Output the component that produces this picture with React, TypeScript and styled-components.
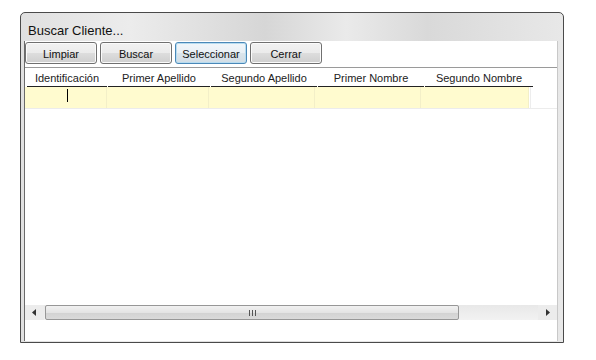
import styled, { createGlobalStyle } from 'styled-components';

const GlobalStyle = createGlobalStyle`
  html, body { margin: 0; padding: 0; background: #ffffff; }
  body { font-family: "Liberation Sans", Arial, sans-serif; }
`;

const columns = [
  { title: 'Identificación', width: 82 },
  { title: 'Primer Apellido', width: 102 },
  { title: 'Segundo Apellido', width: 106 },
  { title: 'Primer Nombre', width: 106 },
  { title: 'Segundo Nombre', width: 108 },
];

export default function App() {
  return (
    <>
      <GlobalStyle />
      <Page>
        <Window>
          <TitleBar>
            <Title>Buscar Cliente...</Title>
          </TitleBar>
          <Client>
            <Toolbar>
              <Button>Limpiar</Button>
              <Button>Buscar</Button>
              <Button $focused>Seleccionar</Button>
              <Button>Cerrar</Button>
            </Toolbar>
            <Grid>
              <HeaderRow>
                {columns.map((c) => (
                  <HeaderCell key={c.title} $w={c.width}>
                    {c.title}
                  </HeaderCell>
                ))}
                <Filler />
              </HeaderRow>
              <DataRow>
                {columns.map((c, i) => (
                  <DataCell key={c.title} $w={c.width}>
                    {i === 0 && <Caret />}
                  </DataCell>
                ))}
                <EmptyCell />
              </DataRow>
              <GridBody />
              <ScrollBar>
                <ArrowButton>
                  <svg width="5" height="7" viewBox="0 0 5 7">
                    <path d="M4 0 L0 3.5 L4 7 Z" fill="#333" />
                  </svg>
                </ArrowButton>
                <Thumb>
                  <Grip>
                    <i />
                    <i />
                    <i />
                  </Grip>
                </Thumb>
                <Track />
                <ArrowButton>
                  <svg width="5" height="7" viewBox="0 0 5 7">
                    <path d="M1 0 L5 3.5 L1 7 Z" fill="#333" />
                  </svg>
                </ArrowButton>
              </ScrollBar>
            </Grid>
            <Footer />
          </Client>
        </Window>
      </Page>
    </>
  );
}

const Page = styled.div`
  padding: 12px 0 0 20px;
`;

const Window = styled.div`
  width: 544px;
  height: 331px;
  box-sizing: border-box;
  border: 1px solid #4a4a4a;
  border-radius: 5px 5px 0 0;
  background: linear-gradient(90deg, #e0e0e0 0%, #ececec 20%, #d6d6d6 45%, #eaeaea 60%, #d9d9d9 75%, #e8e8e8 100%);
  padding: 0 5px 1px 3px;
  display: flex;
  flex-direction: column;
`;

const TitleBar = styled.div`
  height: 28px;
  display: flex;
  align-items: center;
  padding-left: 4px;
  padding-top: 6px;
  box-sizing: border-box;
`;

const Title = styled.span`
  font-size: 13px;
  color: #111;
`;

const Client = styled.div`
  flex: 1;
  background: #ffffff;
  border-left: 1px solid #6a6a6a;
  border-right: 1px solid #c8c8c8;
  display: flex;
  flex-direction: column;
  min-height: 0;
`;

const Toolbar = styled.div`
  height: 26px;
  display: flex;
  align-items: flex-start;
  padding-top: 1px;
  box-sizing: border-box;
  gap: 3px;
`;

const Button = styled.div<{ $focused?: boolean }>`
  width: 72px;
  height: 22px;
  box-sizing: border-box;
  border: 1px solid ${(p) => (p.$focused ? '#4a88b8' : '#707070')};
  border-radius: 3px;
  background: ${(p) =>
    p.$focused
      ? 'linear-gradient(#f1f6fa 0%, #e9f0f5 50%, #dbe5ec 51%, #d2dde5 100%)'
      : 'linear-gradient(#f2f2f2 0%, #ebebeb 50%, #dddddd 51%, #cfcfcf 100%)'};
  box-shadow: inset 0 0 0 1px ${(p) => (p.$focused ? '#b8dcf0' : '#fbfbfb')};
  display: flex;
  align-items: center;
  justify-content: center;
  padding-top: 1px;
  font-size: 11px;
  color: #111;
`;

const Grid = styled.div`
  flex: 1;
  display: flex;
  flex-direction: column;
  border-top: 1px solid #9a9a9a;
  min-height: 0;
`;

const HeaderRow = styled.div`
  height: 19px;
  display: flex;
`;

const HeaderCell = styled.div<{ $w: number }>`
  width: ${(p) => p.$w}px;
  box-sizing: border-box;
  margin-left: 1px;
  border-bottom: 1px solid #222;
  font-size: 11px;
  color: #222;
  display: flex;
  align-items: center;
  justify-content: center;
  padding-top: 2px;
  &:first-child { margin-left: 2px; width: ${(p) => p.$w - 2}px; }
`;

const Filler = styled.div`
  flex: 1;
`;

const DataRow = styled.div`
  height: 21px;
  display: flex;
  border-bottom: 1px solid #ececec;
`;

const DataCell = styled.div<{ $w: number }>`
  position: relative;
  width: ${(p) => p.$w}px;
  background: #fffbcf;
  border-right: 1px solid #f3efc8;
  box-sizing: border-box;
`;

const EmptyCell = styled.div`
  flex: 1;
  border-left: 1px solid #ededed;
  margin-left: 1px;
`;

const Caret = styled.span`
  position: absolute;
  left: 42px;
  top: 2px;
  width: 1px;
  height: 13px;
  background: #000;
`;

const GridBody = styled.div`
  flex: 1;
`;

const ScrollBar = styled.div`
  height: 15px;
  display: flex;
  background: linear-gradient(#e8e8e8, #f2f2f2);
`;

const ArrowButton = styled.div`
  width: 19px;
  display: flex;
  align-items: center;
  justify-content: center;
  background: #ececec;
`;

const Thumb = styled.div`
  width: 414px;
  box-sizing: border-box;
  border: 1px solid #979797;
  border-radius: 2px;
  background: linear-gradient(#f1f1f1 0%, #e4e4e4 50%, #d2d2d2 51%, #dadada 100%);
  display: flex;
  align-items: center;
  justify-content: center;
  margin-left: 1px;
`;

const Grip = styled.div`
  display: flex;
  gap: 2px;
  i {
    width: 1px;
    height: 6px;
    background: #555;
  }
`;

const Track = styled.div`
  flex: 1;
`;

const Footer = styled.div`
  height: 21px;
`;
